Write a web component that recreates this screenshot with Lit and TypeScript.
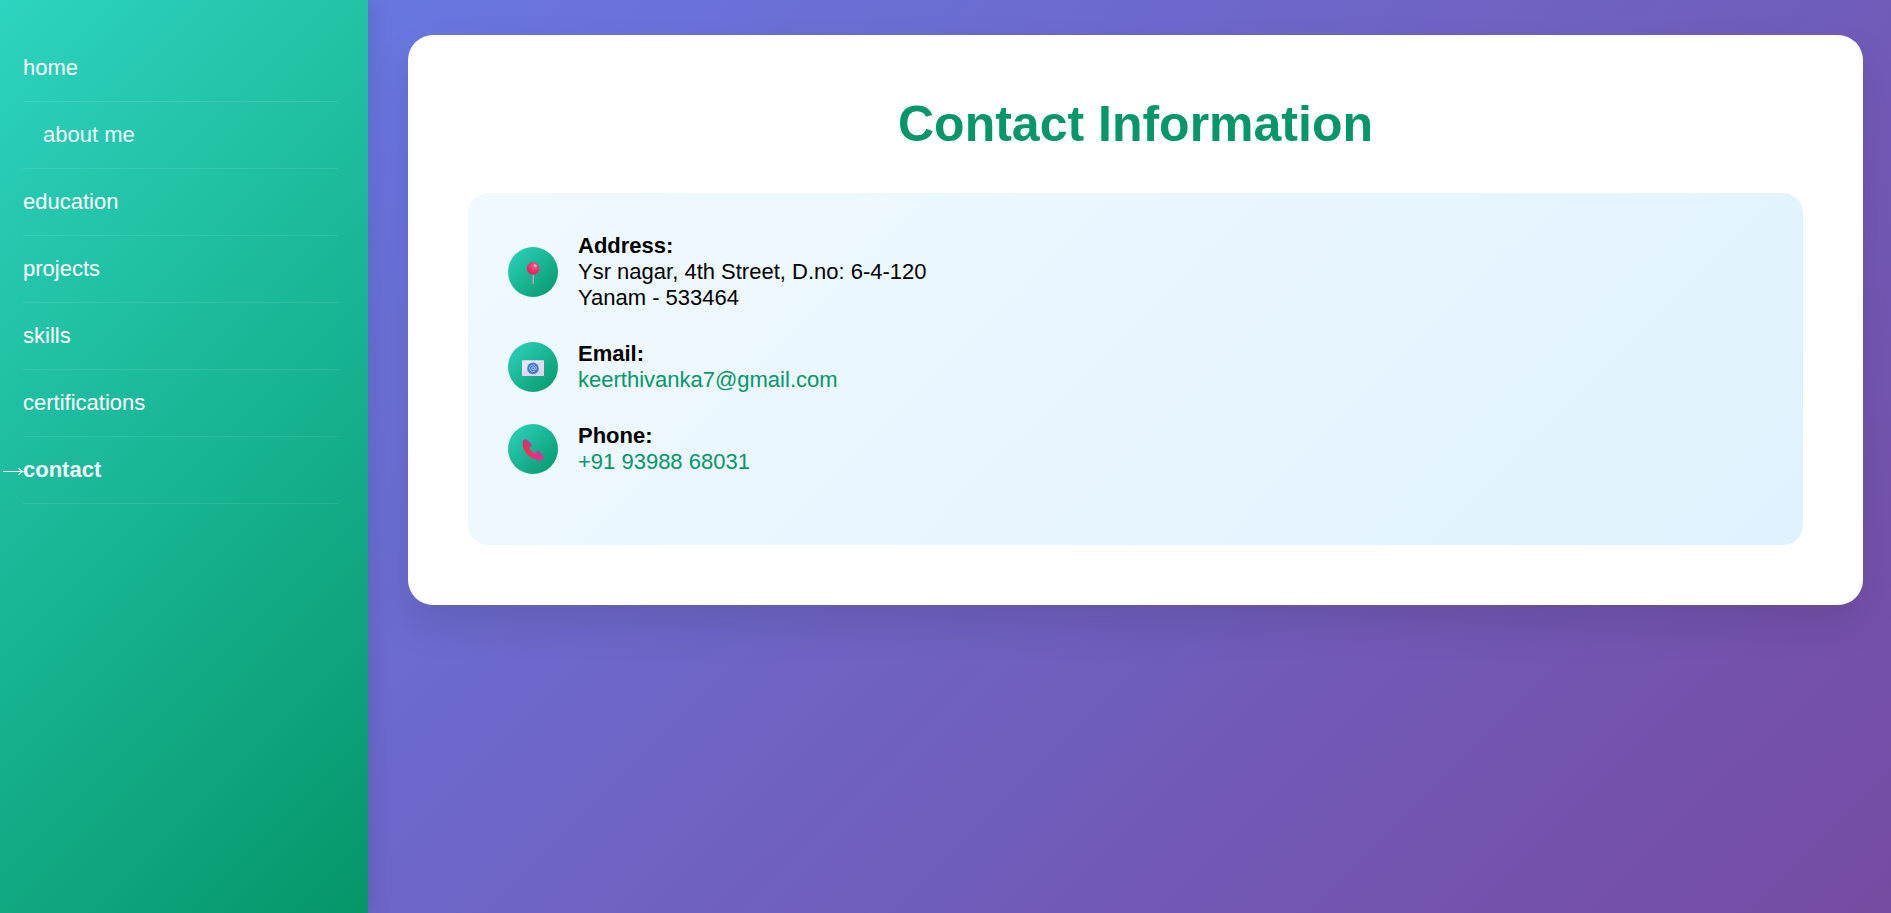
import { LitElement, html, css, svg, nothing } from "lit";
import { customElement, state } from "lit/decorators.js";
import { classMap } from "lit/directives/class-map.js";

const sections = ["home", "about me", "education", "projects", "skills", "certifications", "contact"];

const pin = svg`
  <defs>
    <radialGradient id="ball" cx="0.6" cy="0.3" r="0.75">
      <stop offset="0" stop-color="#ff5c8f" />
      <stop offset="0.5" stop-color="#f5306c" />
      <stop offset="1" stop-color="#d91f58" />
    </radialGradient>
  </defs>
  <rect x="10" y="11" width="2" height="10.8" rx="0.7" fill="#b3a9b8" />
  <rect x="10" y="11" width="0.8" height="10.6" fill="#82909a" />
  <circle cx="11.2" cy="6.4" r="6.3" fill="url(#ball)" />
  <ellipse cx="13.2" cy="3.7" rx="1.6" ry="1.2" fill="#ffb3cb" transform="rotate(35 13.2 3.7)" />`;

const envelope = svg`
  <defs>
    <linearGradient id="paper" x1="0" y1="0" x2="0.6" y2="1">
      <stop offset="0" stop-color="#f1edf4" />
      <stop offset="1" stop-color="#dfd2ee" />
    </linearGradient>
  </defs>
  <rect x="0" y="3.2" width="22" height="15.8" rx="0.8" fill="url(#paper)" />
  <path d="M0.4 3.6 L11 12.1 L21.6 3.6 M0.4 18.6 L8 12.1 M21.6 18.6 L14 12.1" fill="none" stroke="#cfc2d8" stroke-width="0.7" />
  <circle cx="11" cy="11.4" r="5.8" fill="#3f7dd6" />
  <circle cx="11" cy="11.3" r="1.4" fill="none" stroke="#c3d6f6" stroke-width="0.8" />
  <path d="M12.5 9.8 V11.9 Q12.9 13 13.9 12.3 Q14.8 11.1 13.9 9.5 A3.4 3.4 0 1 0 12.8 14.2" fill="none" stroke="#c3d6f6" stroke-width="0.7" />`;

const receiver = svg`
  <defs>
    <linearGradient id="handset" x1="0" y1="0" x2="1" y2="1">
      <stop offset="0" stop-color="#e02a5c" />
      <stop offset="0.45" stop-color="#f03160" />
      <stop offset="1" stop-color="#e0309c" />
    </linearGradient>
  </defs>
  <path d="M2.6 0.4 Q0.4 1.2 0.5 4 Q1 11.4 6 16.3 Q11.5 21.2 18.4 21.6 Q20.8 21.6 21.7 19.2 Q22 17.9 20.9 16.9 L17.3 12.3 Q16.2 11.2 14.9 12.2 L12.7 14.4 Q8.9 12.5 7.2 8.9 L9.3 6.9 Q10.2 5.9 9.2 4.9 L4.8 0.7 Q3.7 0 2.6 0.4 Z" fill="url(#handset)" />
  <path d="M4.2 0.6 L9.2 5 Q10 5.9 9.2 6.9 L8 8 L3 2.2 Z" fill="#b13f9d" />
  <path d="M15.8 11.8 Q16.7 11.6 17.3 12.3 L21.3 17.2 L20 18 L14.2 13 Z" fill="#a646ac" />`;

@customElement("contact-entry")
export class ContactEntry extends LitElement {
  static properties = { label: {}, icon: { attribute: false } };

  declare label: string;
  declare icon: unknown;

  static styles = css`
    :host {
      display: flex;
      align-items: center;
      gap: 20px;
      margin-bottom: 30px;
      font-size: 22px;
      line-height: 26px;
    }
    .badge {
      flex: none;
      display: grid;
      place-items: center;
      width: 50px;
      height: 50px;
      border-radius: 50%;
      background: linear-gradient(135deg, #2dd4bf, #059669);
    }
    .glyph {
      display: block;
      margin-top: 2px;
    }
  `;

  render() {
    return html`
      <span class="badge">
        <svg class="glyph" width="22" height="22" viewBox="0 0 22 22" aria-hidden="true">${this.icon}</svg>
      </span>
      <div>
        <strong>${this.label}</strong>
        <div><slot></slot></div>
      </div>
    `;
  }
}

@customElement("app-root")
export class AppRoot extends LitElement {
  @state() private current = "contact";

  static styles = css`
    :host {
      display: flex;
      min-height: 100vh;
      font-family: "Liberation Sans", Arial, sans-serif;
      color: #000;
      background: linear-gradient(135deg, #667eea 0%, #764ba2 100%);
    }
    .sidebar {
      position: relative;
      z-index: 1;
      flex: none;
      box-sizing: border-box;
      width: 368px;
      padding: 35px 30px 35px 23px;
      background: linear-gradient(135deg, #2dd4bf, #059669);
      box-shadow: 5px 0 20px rgba(0, 0, 0, 0.1);
    }
    .menu {
      margin: 0;
      padding: 0;
      list-style: none;
    }
    .item {
      border-bottom: 1px solid rgba(255, 255, 255, 0.1);
    }
    .link {
      position: relative;
      display: block;
      padding: 20px 0;
      font-size: 22px;
      line-height: 26px;
      color: #fff;
      text-decoration: none;
    }
    .nested {
      padding-left: 20px;
      color: #f0f9ff;
    }
    .current {
      font-weight: bold;
      color: #f0f9ff;
    }
    .arrow {
      position: absolute;
      left: -20px;
      top: 30px;
    }
    .main {
      flex: 1;
      min-width: 0;
      padding: 35px 28px 35px 40px;
    }
    .card {
      padding: 60px;
      border-radius: 25px;
      background: #fff;
      box-shadow: 0 20px 40px rgba(0, 0, 0, 0.1);
    }
    .title {
      margin: 0 0 40px;
      font-size: 50px;
      line-height: 58px;
      text-align: center;
      color: #059669;
    }
    .panel {
      padding: 40px;
      border-radius: 20px;
      background: linear-gradient(135deg, #f0f9ff, #e0f2fe);
    }
    .reach {
      color: #059669;
      text-decoration: none;
    }
  `;

  private open(event: Event, name: string) {
    event.preventDefault();
    this.current = name;
  }

  private arrow() {
    return html`<svg class="arrow" width="22" height="9" viewBox="0 0 22 9" aria-hidden="true">
      <path d="M0 4.5 H20.5 M15.5 1 Q17 3.8 20.5 4.5 Q17 5.2 15.5 8" fill="none" stroke="#f0f9ff" stroke-width="1.1" />
    </svg>`;
  }

  render() {
    return html`
      <nav class="sidebar">
        <ul class="menu">
          ${sections.map(
            (name) => html`<li class="item">
              <a
                class=${classMap({ link: true, nested: name === "about me", current: name === this.current })}
                href="#${name.replace(" ", "-")}"
                @click=${(event: Event) => this.open(event, name)}
                >${name === this.current ? this.arrow() : nothing}${name}</a
              >
            </li>`
          )}
        </ul>
      </nav>
      <main class="main">
        <section class="card">
          <h1 class="title">Contact Information</h1>
          <div class="panel">
            <contact-entry label="Address:" .icon=${pin}
              >Ysr nagar, 4th Street, D.no: 6-4-120<br />Yanam - 533464</contact-entry
            >
            <contact-entry label="Email:" .icon=${envelope}
              ><a class="reach" href="mailto:keerthivanka7@gmail.com">keerthivanka7@gmail.com</a></contact-entry
            >
            <contact-entry label="Phone:" .icon=${receiver}
              ><a class="reach" href="tel:+919398868031">+91 93988 68031</a></contact-entry
            >
          </div>
        </section>
      </main>
    `;
  }
}
